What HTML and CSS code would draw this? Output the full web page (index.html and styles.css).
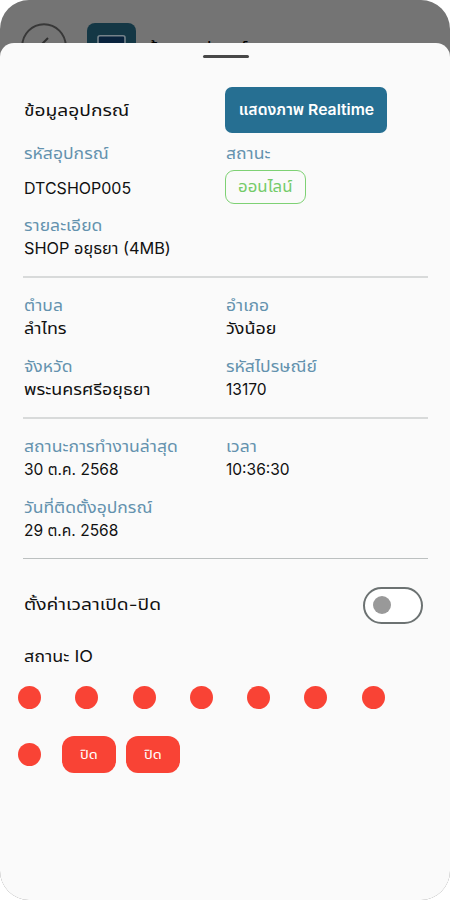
FILE: index.html
```html
<!DOCTYPE html>
<html lang="th">
<head>
<meta charset="utf-8">
<title>ข้อมูลอุปกรณ์</title>
<link rel="stylesheet" href="styles.css">
</head>
<body>
<div class="screen">
  <header class="appbar">
    <svg class="back" viewBox="0 0 46 46"><circle cx="23" cy="23" r="21.7" fill="none" stroke="#383838" stroke-width="2"/><path d="M27 15 19 23l8 8" fill="none" stroke="#303030" stroke-width="2"/></svg>
    <svg class="device" viewBox="0 0 49 49"><rect width="49" height="49" rx="8" fill="#143745"/><rect x="11" y="12.8" width="27" height="21" rx="2" fill="#09233d" stroke="#75828a" stroke-width="1.6"/></svg>
    <span class="bar-title">ข้อมูลอุปกรณ์</span>
  </header>
  <main class="sheet">
    <div class="grabber"></div>
    <div class="grid head">
      <h1><span class="wide-xl">ข้อมูลอุปกรณ์</span></h1>
      <button class="realtime"><span>แสดงภาพ Realtime</span></button>
    </div>
    <div class="grid device-info">
      <div class="field spaced"><label>รหัสอุปกรณ์</label><p>DTCSHOP005</p></div>
      <div class="field"><label>สถานะ</label><span class="chip"><span class="wide">ออนไลน์</span></span></div>
      <div class="field detail"><label>รายละเอียด</label><p><span class="wide-xs">SHOP อยุธยา (4MB)</span></p></div>
    </div>
    <div class="grid section">
      <div class="field"><label>ตำบล</label><p><span class="wide">ลำไทร</span></p></div>
      <div class="field"><label>อำเภอ</label><p><span class="wide">วังน้อย</span></p></div>
      <div class="field"><label>จังหวัด</label><p><span class="wide">พระนครศรีอยุธยา</span></p></div>
      <div class="field"><label>รหัสไปรษณีย์</label><p><span class="narrow">13170</span></p></div>
    </div>
    <div class="grid section final">
      <div class="field"><label>สถานะการทำงานล่าสุด</label><p><span class="narrow">30 ต.ค. 2568</span></p></div>
      <div class="field"><label>เวลา</label><p><span class="narrow">10:36:30</span></p></div>
      <div class="field"><label>วันที่ติดตั้งอุปกรณ์</label><p><span class="narrow">29 ต.ค. 2568</span></p></div>
    </div>
    <div class="timer"><span class="wide-xl">ตั้งค่าเวลาเปิด-ปิด</span><div class="toggle"><i></i></div></div>
    <h2><span class="wide">สถานะ IO</span></h2>
    <div class="io">
      <i class="dot"></i><i class="dot"></i><i class="dot"></i><i class="dot"></i><i class="dot"></i><i class="dot"></i><i class="dot"></i>
    </div>
    <div class="io last"><i class="dot"></i><button class="off"><span class="wide">ปิด</span></button><button class="off"><span class="wide">ปิด</span></button></div>
  </main>
</div>
</body>
</html>
```
FILE: styles.css
```css
* { box-sizing: border-box; }
body { margin: 0; background: #fff; font-family: Inter, "Noto Sans Thai", "Noto Sans", sans-serif; font-size: 16px; color: #111; }
h1, h2, p { margin: 0; font-size: 16px; font-weight: 400; }
button { border: 0; font-family: inherit; padding: 0; }
.screen { width: 450px; height: 900px; border-radius: 29px; background: #747474; overflow: hidden; display: flex; flex-direction: column; }
.appbar { height: 43px; flex: none; padding: 23px 0 0 21px; display: flex; align-items: flex-start; }
.back { width: 46px; height: 46px; flex: none; }
.device { width: 49px; height: 49px; flex: none; margin-left: 20px; }
.bar-title { margin-left: 12px; line-height: 48px; color: #000; white-space: nowrap; transform: scaleX(1.14); transform-origin: left; }
.sheet { flex: 1; position: relative; background: #fafafa; border-radius: 14px 14px 0 0; padding: 12px 22px 0 24px; }
.grabber { width: 46px; height: 3px; border-radius: 2px; background: #484848; margin: 0 auto; }
.grid { display: grid; grid-template-columns: 202px 1fr; }
.wide, .wide-xl, .wide-xs, .narrow { display: inline-block; transform-origin: left; }
.wide { transform: scaleX(1.12); }
.wide-xl { transform: scaleX(1.2); }
.wide-xs { transform: scaleX(1.02); }
.narrow { transform: scaleX(.97); }
.head { margin-top: 29px; align-items: center; }
h1 { margin-top: 2px; }
.realtime { width: 162px; height: 46px; border-radius: 7px; background: #266f92; color: #fff; font-size: 15px; font-weight: 600; margin-left: -1px; }
.realtime span { display: inline-block; transform: scaleX(1.05); }
.device-info { padding-top: 10px; height: 145px; margin-left: -1px; padding-left: 1px; border-bottom: 2px solid #d8dada; align-content: start; }
.field { line-height: 22px; white-space: nowrap; }
.field label { display: block; width: max-content; height: 22px; color: #6492ae; font-size: 15px; transform: scaleX(1.17); transform-origin: left; }
.field p { height: 22px; }
.spaced p { margin-top: 12px; }
.chip { display: block; width: 81px; height: 34px; margin-top: 5px; margin-left: -1px; border: 1.5px solid #7ed174; border-radius: 9px; color: #74cb69; font-size: 15px; line-height: 31px; text-align: center; }
.chip .wide, .off .wide { transform-origin: center; }
.detail { margin-top: 11px; }
.section { height: 141px; padding-top: 17px; margin-left: -1px; padding-left: 1px; row-gap: 17px; align-content: start; border-bottom: 2px solid #d8dada; }
.final { height: 140px; padding-top: 17px; border-bottom: 1px solid #bcc0c0; }
.timer { height: 92px; display: flex; align-items: center; justify-content: space-between; padding-right: 5px; }
.toggle { width: 60px; height: 37px; border: 2px solid #6c7272; border-radius: 19px; display: flex; align-items: center; padding-left: 8px; background: #fff; }
.toggle i { width: 18px; height: 18px; border-radius: 50%; background: #999; }
h2 { line-height: 22px; margin-top: -6px; }
.io { display: flex; align-items: center; gap: 34.3px; height: 23px; margin: 19px 0 0 -6px; }
.dot { width: 23px; height: 23px; border-radius: 50%; background: #f94335; flex: none; }
.last { gap: 10px; margin-top: 27px; height: 37px; }
.last .dot { margin-right: 11px; }
.off { width: 54px; height: 37px; border-radius: 12px; background: #f94335; color: #fff; font-size: 13px; }
```
